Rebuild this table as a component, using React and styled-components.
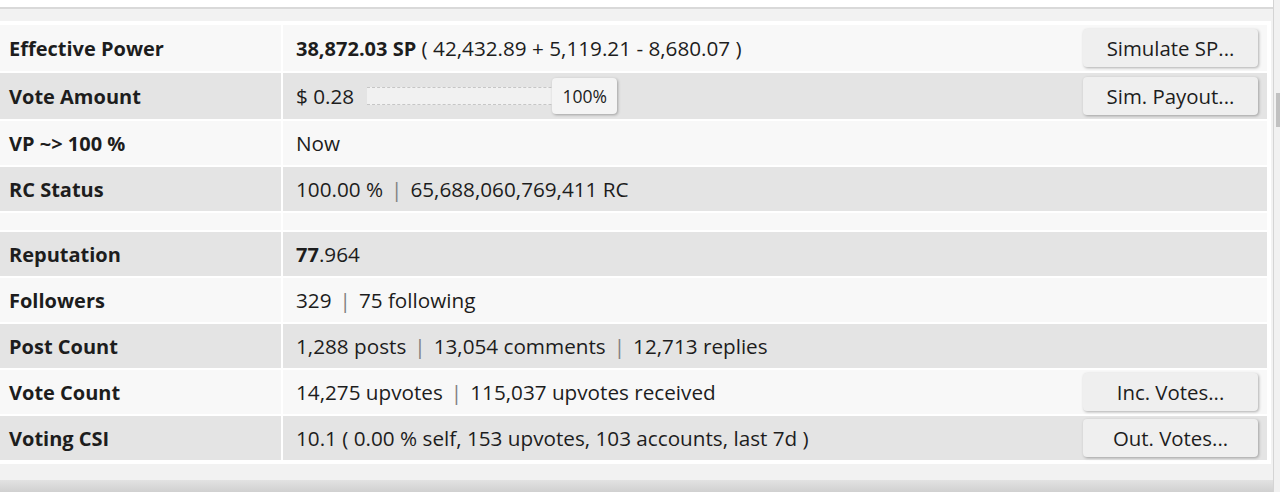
import React from "react";
import styled, { createGlobalStyle } from "styled-components";

const GlobalStyle = createGlobalStyle`
  *, *::before, *::after {
    box-sizing: border-box;
  }
  html, body {
    margin: 0;
    padding: 0;
    background: #ffffff;
  }
  body {
    font-family: "Open Sans", "Noto Sans", "Liberation Sans", sans-serif;
    color: #1d1d1d;
    overflow: hidden;
  }
`;

const Page = styled.div`
  display: flex;
  width: 1280px;
  height: 492px;
  overflow: hidden;
`;

const Main = styled.div`
  flex: 1;
  display: flex;
  flex-direction: column;
  padding-top: 7px;
  border-right: 1px solid #d4d4d4;
`;

const Card = styled.div`
  border-top: 2px solid #d9d9d9;
  background: #f2f2f2;
  padding: 12px 2px 16px 0;
`;

const WhiteBox = styled.div`
  background: #ffffff;
  padding: 2px 2px 2px 0;
`;

const Table = styled.table`
  border-collapse: separate;
  border-spacing: 2px;
  margin-left: -2px;
  width: calc(100% + 2px);
  table-layout: fixed;
  font-size: 20px;
`;

const Row = styled.tr`
  height: ${(p) => p.$h}px;

  &:nth-child(odd) td {
    background: #f8f8f8;
  }
  &:nth-child(even) td {
    background: #e4e4e4;
  }
`;

const Label = styled.td`
  width: 281px;
  padding: 0 9px;
  font-weight: 700;
  white-space: nowrap;
`;

const Value = styled.td`
  padding: 0 9px 0 13px;
`;

const ValueLine = styled.div`
  display: flex;
  align-items: center;
  justify-content: space-between;
`;

const ValueText = styled.div`
  display: flex;
  align-items: center;
  white-space: pre;
  font-size: 20.7px;

  b {
    font-weight: 700;
    font-size: 20px;
  }
`;

const Sep = styled.span`
  color: #808080;
  margin: 0 8px;
`;

const Track = styled.div`
  display: flex;
  align-items: center;
  justify-content: flex-end;
  width: 250px;
  height: 18px;
  margin-left: 13px;
  background: #f1f1f1;
  border-top: 1px dashed #c6c6c6;
  border-bottom: 1px dashed #c6c6c6;
`;

const Thumb = styled.div`
  display: flex;
  align-items: center;
  justify-content: center;
  width: 65px;
  height: 36px;
  margin: -9px 0;
  border-radius: 4px;
  background: #f4f4f4;
  box-shadow: 1px 1px 3px rgba(0, 0, 0, 0.3);
  font-size: 17.5px;
`;

const Button = styled.button`
  width: 175px;
  height: 38px;
  border: none;
  border-radius: 4px;
  background: #efefef;
  box-shadow: 1px 1px 3px rgba(0, 0, 0, 0.3);
  font-family: inherit;
  font-size: 20.4px;
  color: #1d1d1d;
  cursor: pointer;
`;

const BottomStrip = styled.div`
  flex: 1;
  background: linear-gradient(180deg, #e2e2e2 0%, #d0d0d0 100%);
`;

const ScrollTrack = styled.div`
  width: 6px;
  display: flex;
  justify-content: flex-end;
  background: #f1f1f1;
`;

const ScrollThumb = styled.div`
  width: 4px;
  height: 34px;
  margin-top: 93px;
  background: #c1c1c1;
`;

const ROWS = [
  {
    label: "Effective Power",
    value: (
      <>
        <b>38,872.03 SP</b> ( 42,432.89 + 5,119.21 - 8,680.07 )
      </>
    ),
    action: "Simulate SP...",
    tall: true,
  },
  {
    label: "Vote Amount",
    value: (
      <>
        $ 0.28
        <Track>
          <Thumb>100%</Thumb>
        </Track>
      </>
    ),
    action: "Sim. Payout...",
    tall: true,
  },
  { label: "VP ~> 100 %", value: "Now" },
  {
    label: "RC Status",
    value: (
      <>
        100.00 %<Sep>|</Sep>65,688,060,769,411 RC
      </>
    ),
  },
  { spacer: true },
  {
    label: "Reputation",
    value: (
      <>
        <b>77</b>.964
      </>
    ),
  },
  {
    label: "Followers",
    value: (
      <>
        329<Sep>|</Sep>75 following
      </>
    ),
  },
  {
    label: "Post Count",
    value: (
      <>
        1,288 posts<Sep>|</Sep>13,054 comments<Sep>|</Sep>12,713 replies
      </>
    ),
  },
  {
    label: "Vote Count",
    value: (
      <>
        14,275 upvotes<Sep>|</Sep>115,037 upvotes received
      </>
    ),
    action: "Inc. Votes...",
  },
  {
    label: "Voting CSI",
    value: "10.1 ( 0.00 % self, 153 upvotes, 103 accounts, last 7d )",
    action: "Out. Votes...",
  },
];

function App() {
  return (
    <>
      <GlobalStyle />
      <Page>
        <Main>
          <Card>
            <WhiteBox>
              <Table>
                <tbody>
                  {ROWS.map((row, i) =>
                    row.spacer ? (
                      <Row key={i} $h={17}>
                        <Label />
                        <Value />
                      </Row>
                    ) : (
                      <Row key={i} $h={row.tall ? 46 : 44}>
                        <Label>{row.label}</Label>
                        <Value>
                          <ValueLine>
                            <ValueText>{row.value}</ValueText>
                            {row.action && <Button>{row.action}</Button>}
                          </ValueLine>
                        </Value>
                      </Row>
                    )
                  )}
                </tbody>
              </Table>
            </WhiteBox>
          </Card>
          <BottomStrip />
        </Main>
        <ScrollTrack>
          <ScrollThumb />
        </ScrollTrack>
      </Page>
    </>
  );
}

export default App;
